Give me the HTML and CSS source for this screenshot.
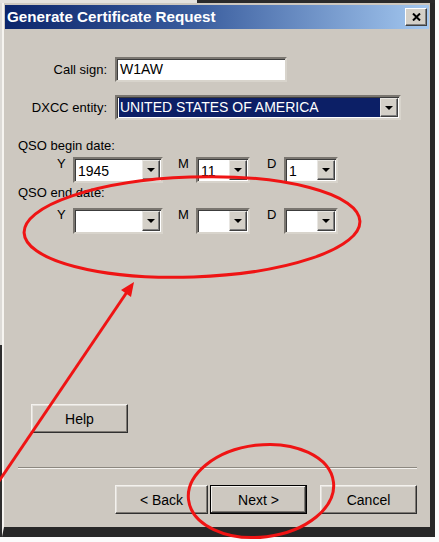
FILE: index.html
```html
<!DOCTYPE html>
<html>
<head>
<meta charset="utf-8">
<link rel="stylesheet" href="styles.css">
</head>
<body>
<div class="screen">
  <div class="window">
    <div class="titlebar">
      <span class="title">Generate Certificate Request</span>
      <span class="close"><svg width="9" height="8" viewBox="0 0 9 8"><path d="M1 0.5 L8 7.5 M8 0.5 L1 7.5" stroke="#000" stroke-width="2"/></svg></span>
    </div>
    <div class="content">
      <div class="form">
        <span class="lbl">Call sign:</span>
        <div class="edit callsign">W1AW</div>
        <span class="lbl">DXCC entity:</span>
        <div class="combo dxcc"><span class="val sel">UNITED STATES OF AMERICA</span><span class="dd"></span></div>
      </div>

      <div class="group-label">QSO begin date:</div>
      <div class="date-row">
        <span class="dl dl-y">Y</span>
        <div class="combo cy"><span class="val">1945</span><span class="dd"></span></div>
        <span class="dl dl-m">M</span>
        <div class="combo cm"><span class="val">11</span><span class="dd"></span></div>
        <span class="dl dl-d">D</span>
        <div class="combo cd"><span class="val">1</span><span class="dd"></span></div>
      </div>

      <div class="group-label end">QSO end date:</div>
      <div class="date-row second">
        <span class="dl dl-y">Y</span>
        <div class="combo cy"><span class="val"></span><span class="dd"></span></div>
        <span class="dl dl-m">M</span>
        <div class="combo cm"><span class="val"></span><span class="dd"></span></div>
        <span class="dl dl-d">D</span>
        <div class="combo cd"><span class="val"></span><span class="dd"></span></div>
      </div>

      <div class="help-row"><button class="btn help">Help</button></div>
      <div class="sep"></div>
      <div class="nav-row">
        <button class="btn back">&lt; Back</button>
        <button class="btn next default">Next &gt;</button>
        <button class="btn cancel">Cancel</button>
      </div>
    </div>
  </div>
  <svg class="annot" width="439" height="542" viewBox="0 0 439 542">
    <ellipse cx="192" cy="227" rx="168" ry="50" transform="rotate(-2 192 227)" fill="none" stroke="#ef1414" stroke-width="3"/>
    <ellipse cx="261" cy="491" rx="73" ry="46" transform="rotate(-7 261 491)" fill="none" stroke="#ef1414" stroke-width="3"/>
    <line x1="-3" y1="484" x2="127" y2="292" stroke="#ef1414" stroke-width="3"/>
    <polygon points="134,282 131,297 121,290" fill="#ef1414"/>
  </svg>
</div>
</body>
</html>
```

FILE: styles.css
```css
* { box-sizing: border-box; }
html, body { margin: 0; padding: 0; }
body {
  background: #fbfbfb;
  font-family: "Liberation Sans", Arial, sans-serif;
  color: #000;
}
.screen {
  position: relative;
  width: 439px;
  height: 542px;
  overflow: hidden;
  padding: 3px 0 0 2px;
  background:
    linear-gradient(to right, #e4e2de 197px, #2a2a2a 197px) 0 0 / 435px 3px no-repeat,
    linear-gradient(to bottom, #dddbd7 345px, #2e2e2e 345px) 0 0 / 2px 537px no-repeat,
    #fbfbfb;
}
.window {
  width: 433px;
  height: 534px;
  background: #cdc8c0;
  border-left: 2px solid #f6f4f0;
  border-right: 5px solid #272727;
  border-bottom: 10px solid #272727;
  padding: 2px 1px 0 1px;
  display: flex;
  flex-direction: column;
}
.titlebar {
  height: 24px;
  flex: none;
  background: linear-gradient(to right, #0b256b 0%, #3a5d9e 45%, #a4c8f0 100%);
  display: flex;
  align-items: center;
  justify-content: space-between;
  padding: 0 2px 0 2px;
}
.title {
  color: #fff;
  font-weight: bold;
  font-size: 15.2px;
  line-height: 18px;
}
.close {
  width: 22px;
  height: 18px;
  background: #d4d0c8;
  border: 1px solid;
  border-color: #fff #404040 #404040 #fff;
  box-shadow: inset -1px -1px #808080;
  display: flex;
  align-items: center;
  justify-content: center;
}
.content {
  flex: 1;
  display: flex;
  flex-direction: column;
}
.form {
  display: grid;
  grid-template-columns: 102px 286px;
  column-gap: 8px;
  row-gap: 13px;
  margin-top: 28px;
  align-items: center;
}
.lbl {
  font-size: 13px;
  text-align: right;
  line-height: 15px;
}
.edit, .combo {
  height: 25px;
  background: #fff;
  border: 2px solid;
  border-color: #7a7670 #d8d4cc #d8d4cc #7a7670;
  box-shadow: inset 1px 1px #3c3c3c, 0 0 0 0 transparent;
  outline: 1px solid transparent;
  position: relative;
}
.edit {
  width: 172px;
  font-size: 14px;
  line-height: 21px;
  padding-left: 3px;
}
.combo {
  display: flex;
  padding: 1px 1px 1px 2px;
}
.combo .val {
  flex: 1;
  font-size: 14px;
  line-height: 19px;
  padding-left: 1px;
  padding-top: 2px;
}
.combo .val.sel {
  background: #0c1f66;
  color: #fff;
  padding-top: 0;
  padding-left: 1px;
  line-height: 19px;
}
.dd {
  width: 18px;
  flex: none;
  background: #d4d0c8;
  border: 1px solid;
  border-color: #e8e6e2 #404040 #404040 #e8e6e2;
  box-shadow: inset -1px -1px #808080;
  position: relative;
}
.dd::after {
  content: "";
  position: absolute;
  left: 50%;
  top: 50%;
  margin-left: -4px;
  margin-top: -2px;
  border-left: 4px solid transparent;
  border-right: 4px solid transparent;
  border-top: 4px solid #000;
}
.dxcc { width: 286px; }
.group-label {
  font-size: 13px;
  line-height: 16px;
  margin: 18px 0 0 13px;
}
.group-label.end { margin-top: 2px; }
.date-row {
  display: flex;
  align-items: flex-start;
  padding-left: 52px;
  margin-top: 3px;
  height: 26px;
}
.date-row.second { margin-top: 7px; }
.date-row .combo { height: 26px; }
.dl {
  font-size: 13px;
  line-height: 15px;
  margin-top: -1px;
}
.dl-y { width: 16px; }
.dl-m { width: 18px; margin-left: 15px; }
.dl-d { width: 17px; margin-left: 17px; }
.cy { width: 90px; }
.cm { width: 54px; }
.cd { width: 54px; }
.btn {
  font-family: "Liberation Sans", Arial, sans-serif;
  font-size: 14px;
  color: #000;
  height: 29px;
  background: #cdc8c0;
  border: 1px solid;
  border-color: #f4f2ee #303030 #303030 #f4f2ee;
  box-shadow: inset -1px -1px #7e7a74, inset 1px 1px #e2dfda;
  padding: 0;
  margin: 0;
}
.help-row {
  margin-top: 170px;
  padding-left: 26px;
  display: flex;
}
.help { width: 97px; }
.sep {
  margin: 34px 0 0 13px;
  width: 399px;
  height: 2px;
  border-top: 1px solid #8c8880;
  border-bottom: 1px solid #f4f2ee;
}
.nav-row {
  display: flex;
  margin-top: 16px;
  padding-left: 110px;
}
.back { width: 93px; }
.next { width: 97px; margin-left: 2px; }
.cancel { width: 97px; margin-left: 13px; }
.default {
  border: 1px solid #000;
  box-shadow: inset -1px -1px #303030, inset 1px 1px #f4f2ee, inset -2px -2px #7e7a74;
}
.annot {
  position: absolute;
  left: 0;
  top: 0;
  pointer-events: none;
}
```
